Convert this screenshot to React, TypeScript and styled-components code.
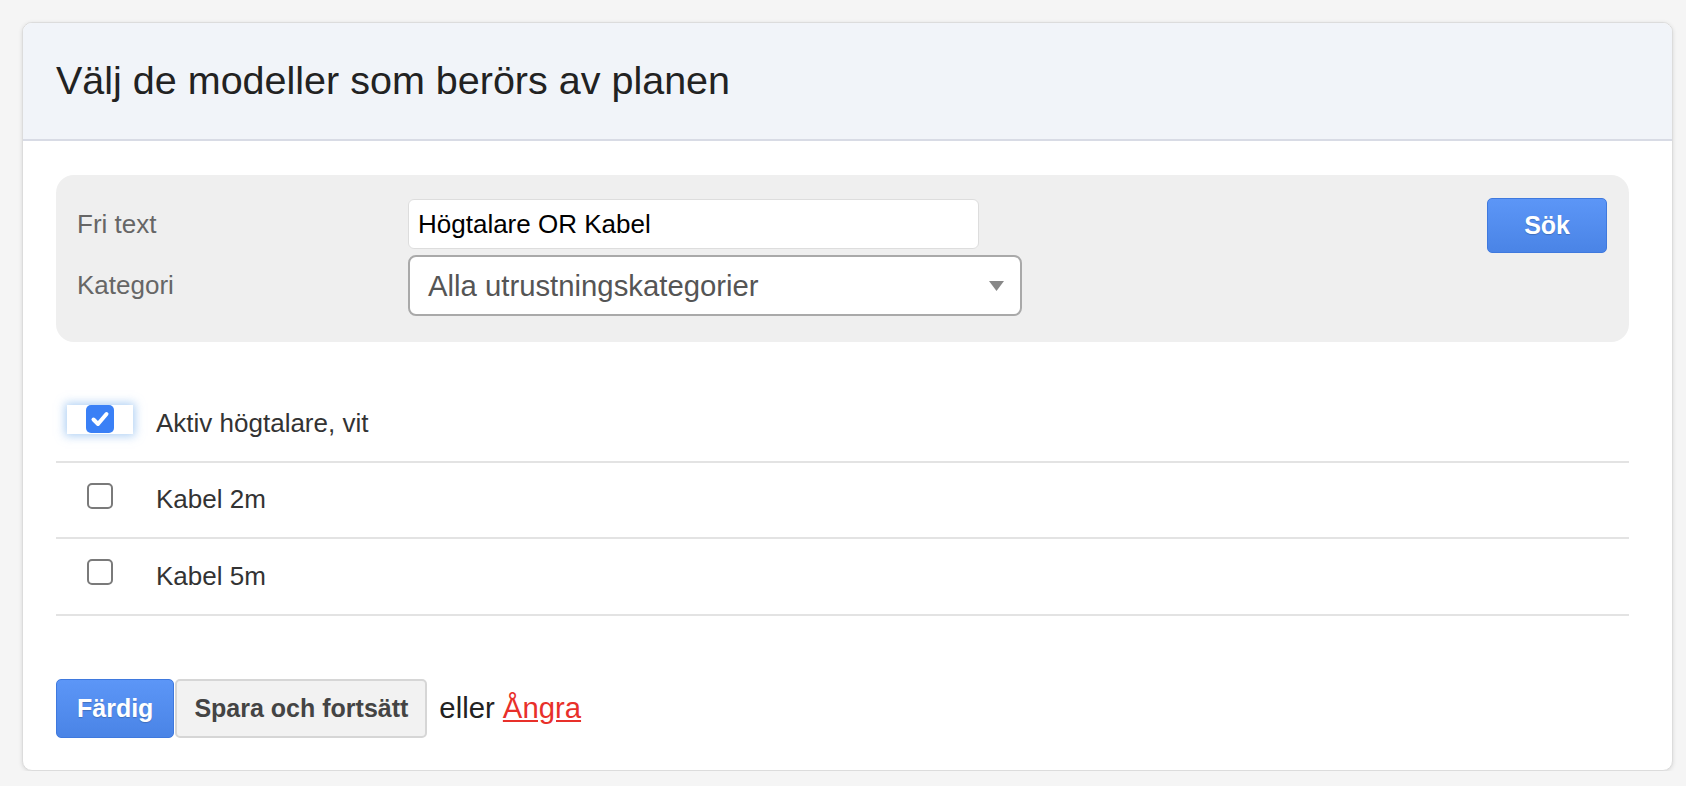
import React, { useState } from 'react';
import styled, { createGlobalStyle } from 'styled-components';

type Model = { id: number; name: string; checked: boolean };

const initialModels: Model[] = [
  { id: 1, name: 'Aktiv högtalare, vit', checked: true },
  { id: 2, name: 'Kabel 2m', checked: false },
  { id: 3, name: 'Kabel 5m', checked: false },
];

const App = () => {
  const [query, setQuery] = useState('Högtalare OR Kabel');
  const [models, setModels] = useState<Model[]>(initialModels);

  const toggle = (id: number) =>
    setModels(prev =>
      prev.map(m => (m.id === id ? { ...m, checked: !m.checked } : m))
    );

  return (
    <>
      <GlobalStyle />
      <Card>
        <Header>
          <Title>Välj de modeller som berörs av planen</Title>
        </Header>
        <Body>
          <SearchPanel>
            <Label>Fri text</Label>
            <TextInput value={query} onChange={e => setQuery(e.target.value)} />
            <SearchButton>
              <PrimaryButton $wide>Sök</PrimaryButton>
            </SearchButton>
            <Label>Kategori</Label>
            <SelectBox>
              <span>Alla utrustningskategorier</span>
              <svg width="15" height="10" viewBox="0 0 15 10">
                <path d="M0 0 H15 L7.5 10 Z" fill="#888" />
              </svg>
            </SelectBox>
          </SearchPanel>

          <ModelList>
            {models.map(model => (
              <ModelRow key={model.id} onClick={() => toggle(model.id)}>
                <CheckCell $focused={model.id === 1}>
                  <CheckBox $checked={model.checked}>
                    {model.checked && (
                      <svg width="24" height="24" viewBox="0 0 24 24">
                        <path
                          d="M5.5 12.5 L10 17 L18.5 7"
                          fill="none"
                          stroke="#fff"
                          strokeWidth="4"
                          strokeLinecap="round"
                          strokeLinejoin="round"
                        />
                      </svg>
                    )}
                  </CheckBox>
                </CheckCell>
                <ModelName>{model.name}</ModelName>
              </ModelRow>
            ))}
          </ModelList>

          <Footer>
            <PrimaryButton>Färdig</PrimaryButton>
            <SecondaryButton>Spara och fortsätt</SecondaryButton>
            <FooterText>
              eller <CancelLink href="#">Ångra</CancelLink>
            </FooterText>
          </Footer>
        </Body>
      </Card>
    </>
  );
};

export default App;

const GlobalStyle = createGlobalStyle`
  * {
    box-sizing: border-box;
  }

  body {
    margin: 0;
    background-color: #f5f5f5;
    font-family: 'Liberation Sans', Arial, sans-serif;
    color: #333;
  }
`;

const Card = styled.div`
  width: 1651px;
  margin: 22px 0 0 22px;
  background-color: #ffffff;
  border: 1px solid #dcdcdc;
  border-radius: 10px;
  box-shadow: 0 1px 4px rgba(0, 0, 0, 0.12);
  overflow: hidden;
`;

const Header = styled.div`
  display: flex;
  align-items: center;
  height: 118px;
  padding-left: 33px;
  background-color: #f1f4f9;
  border-bottom: 2px solid #d8dbe5;
`;

const Title = styled.h1`
  margin: 0;
  font-size: 39.5px;
  font-weight: 400;
  line-height: 1;
  color: #222;
`;

const Body = styled.div`
  padding: 34px 43px 32px 33px;
`;

const SearchPanel = styled.div`
  display: grid;
  grid-template-columns: 331px 1fr auto;
  grid-template-rows: 50px 61px;
  row-gap: 6px;
  align-items: center;
  padding: 24px 22px 26px 21px;
  background-color: #efefef;
  border-radius: 18px;
`;

const Label = styled.div`
  font-size: 26px;
  color: #666;
`;

const TextInput = styled.input`
  width: 571px;
  height: 50px;
  padding: 0 9px;
  border: 1.5px solid #dddddd;
  border-radius: 6px;
  background-color: #ffffff;
  font-family: inherit;
  font-size: 26px;
  color: #000;
  outline: none;
`;

const SearchButton = styled.div`
  grid-column: 3;
  grid-row: 1 / span 2;
  align-self: start;
  margin-top: -1px;
`;

const SelectBox = styled.div`
  display: flex;
  align-items: center;
  justify-content: space-between;
  width: 614px;
  height: 61px;
  padding: 0 16px 0 18px;
  border: 2px solid #a9a9a9;
  border-radius: 8px;
  background-color: #ffffff;
  font-size: 29.3px;
  color: #555;
`;

const ModelList = styled.div`
  margin-top: 44px;
`;

const ModelRow = styled.div`
  display: flex;
  align-items: center;
  height: 76.5px;
  padding-left: 11px;
  border-bottom: 2px solid #e3e3e3;
  cursor: pointer;
`;

const CheckCell = styled.div<{ $focused: boolean }>`
  display: flex;
  align-items: center;
  justify-content: center;
  width: 66px;
  height: 29px;
  margin-bottom: 8px;
  background-color: ${props => (props.$focused ? '#ffffff' : 'transparent')};
  box-shadow: ${props =>
    props.$focused ? '0 0 9px 2px rgba(110, 170, 235, 0.55)' : 'none'};
`;

const CheckBox = styled.span<{ $checked: boolean }>`
  display: flex;
  align-items: center;
  justify-content: center;
  width: ${props => (props.$checked ? '28px' : '26px')};
  height: ${props => (props.$checked ? '28px' : '26px')};
  border-radius: 5px;
  border: ${props => (props.$checked ? 'none' : '2px solid #7a7a7a')};
  background-color: ${props => (props.$checked ? '#3a80f6' : '#ffffff')};
`;

const ModelName = styled.span`
  margin-left: 23px;
  font-size: 26px;
  color: #333;
`;

const Footer = styled.div`
  display: flex;
  align-items: center;
  gap: 1px;
  margin-top: 63px;
`;

const PrimaryButton = styled.button<{ $wide?: boolean }>`
  height: ${props => (props.$wide ? '55px' : '59px')};
  padding: 0 ${props => (props.$wide ? '36px' : '20px')};
  border: 1px solid #3f79de;
  border-radius: 5px;
  background: linear-gradient(#5c96f7, #4a84e6);
  font-family: inherit;
  font-size: 25px;
  font-weight: 700;
  color: #ffffff;
  text-shadow: 0 1px 1px rgba(0, 0, 0, 0.2);
  cursor: pointer;
`;

const SecondaryButton = styled.button`
  height: 59px;
  padding: 0 17px;
  border: 2px solid #d6d6d6;
  border-radius: 5px;
  background-color: #f2f2f2;
  font-family: inherit;
  font-size: 25px;
  font-weight: 700;
  color: #444;
  cursor: pointer;
`;

const FooterText = styled.span`
  margin-left: 11px;
  font-size: 29.3px;
  color: #222;
`;

const CancelLink = styled.a`
  color: #e8302a;
  text-decoration: underline;
`;
